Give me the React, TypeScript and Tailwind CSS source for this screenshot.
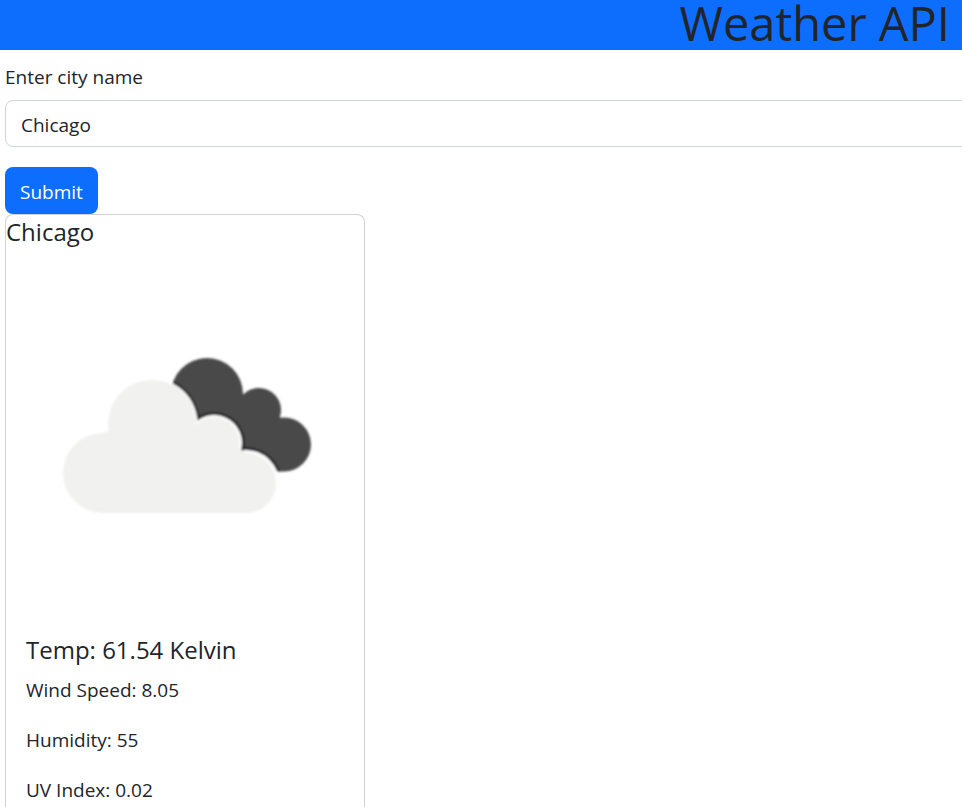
import { useState } from "react";

function CloudsIcon() {
  return (
    <svg viewBox="0 0 358 358" role="img" aria-label="Broken clouds" className="block w-full">
      <defs>
        <filter id="soft" x="-5%" y="-5%" width="110%" height="110%">
          <feGaussianBlur stdDeviation="0.8" />
        </filter>
        <clipPath id="rear-cloud">
          <circle cx="201" cy="139" r="36" />
          <circle cx="253" cy="155" r="22" />
          <circle cx="278" cy="189.500" r="27" />
          <path d="M180 140 L237 139 L275 163 L278 216.500 L240 216 Z" />
        </clipPath>
      </defs>
      <g filter="url(#soft)">
        <g clipPath="url(#rear-cloud)">
          <rect x="150" y="90" width="170" height="140" fill="#48484a" />
          <g fill="#2b2b2d">
            <circle cx="146" cy="169" r="48" />
            <circle cx="208" cy="188" r="31" />
            <circle cx="240" cy="228" r="36" />
          </g>
        </g>
        <g fill="#ffffff">
          <circle cx="146" cy="169" r="45.500" />
          <circle cx="208" cy="188" r="28" />
          <circle cx="240" cy="228" r="33" />
        </g>
        <g fill="#f1f1f0">
          <circle cx="97" cy="218" r="40" />
          <circle cx="146" cy="169" r="44" />
          <circle cx="208" cy="188" r="25.500" />
          <circle cx="240" cy="228" r="30" />
          <path d="M97 178 L146 160 L208 180 L240 198 V258 H97 Z" />
        </g>
      </g>
    </svg>
  );
}

const readings = [
  { label: "Wind Speed", value: "8.05" },
  { label: "Humidity", value: "55" },
  { label: "UV Index", value: "0.02" },
];

export default function App() {
  const [city, setCity] = useState("Chicago");

  return (
    <div className="flex min-h-screen flex-col overflow-x-hidden bg-white font-['Open_Sans','Noto_Sans',sans-serif] text-[19px] leading-[30px] text-[#212529]">
      <header className="flex justify-end bg-[#0d6efd] px-3 pb-1">
        <h1 className="text-[47px] leading-[46px] whitespace-nowrap">Weather API</h1>
      </header>
      <main className="flex grow flex-col px-[5px] pt-3">
        <form onSubmit={(event) => event.preventDefault()}>
          <label htmlFor="city" className="mb-2 block">
            Enter city name
          </label>
          <input
            id="city"
            type="text"
            value={city}
            onChange={(event) => setCity(event.target.value)}
            className="block h-[47px] w-[110%] rounded-lg border border-[#ced4da] bg-white px-[15px] pt-0.5 outline-none"
          />
          <button
            type="submit"
            className="mt-5 block h-[47px] rounded-lg bg-[#0d6efd] px-[15px] pt-0.5 text-white"
          >
            Submit
          </button>
        </form>
        <section className="flex w-[360px] max-w-full grow flex-col rounded-t-lg border border-b-0 border-[#d2d2d2] pt-0.5">
          <h2 className="mb-2 text-2xl leading-[30px]">Chicago</h2>
          <CloudsIcon />
          <div className="px-5 pt-[22px]">
            <h3 className="mb-[10px] text-2xl leading-[30px]">Temp: 61.54 Kelvin</h3>
            {readings.map((reading) => (
              <p key={reading.label} className="not-last:mb-5">
                {reading.label}: {reading.value}
              </p>
            ))}
          </div>
        </section>
      </main>
    </div>
  );
}
